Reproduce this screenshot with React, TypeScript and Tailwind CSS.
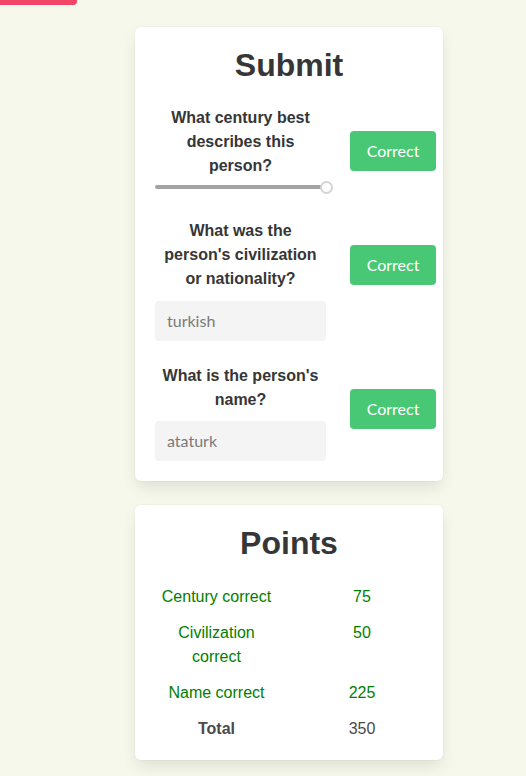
import React from "react";

const sans = { fontFamily: '"Liberation Sans", Arial, sans-serif' };

function Btn() {
  return (
    <button
      className="w-[86px] h-10 shrink-0 rounded-[4px] bg-[#48c774] text-white text-[16px] leading-6"
      style={{ fontFamily: 'Lato, "Open Sans", sans-serif' }}
    >
      Correct
    </button>
  );
}

function Field({ value }: { value: string }) {
  return (
    <div
      className="h-10 w-[171px] rounded-[4px] bg-[#f4f4f4] px-3 flex items-center text-[16px] text-[#7a7a7a]"
      style={{ fontFamily: 'Lato, "Open Sans", sans-serif' }}
    >
      {value}
    </div>
  );
}

export default function App() {
  return (
    <div className="min-h-[776px] bg-[#f5f8ea]" style={sans}>
      <div className="h-[5px] w-[77px] rounded-br-[4px] bg-[#f14668]" />
      <div className="ml-[135px] w-[308px] pt-[22px] pb-4 flex flex-col gap-6">
        {/* Submit card */}
        <div className="rounded-md bg-white pt-[18px] pb-5 pl-5 shadow-[0_8px_16px_-2px_rgba(10,10,10,0.1),0_0_0_1px_rgba(10,10,10,0.02)]">
          <h1 className="-ml-5 text-center text-[32px] leading-10 font-bold text-[#363636]">Submit</h1>
          <div className="mt-[21px] flex flex-col">
            <div className="flex items-start gap-6">
              <div className="w-[171px] flex flex-col">
                <p className="text-center text-[16px] leading-6 font-bold text-[#363636]">
                  What century best describes this person?
                </p>
                <div className="relative h-5 flex items-center -mt-px">
                  <div className="h-[4px] w-[168px] rounded-full bg-[#a3a3a3]" />
                  <div className="absolute left-[165px] top-[3.5px] h-[13px] w-[13px] rounded-full border-2 border-[#d4d4d4] bg-white" />
                </div>
              </div>
              <div className="mt-[25px]">
                <Btn />
              </div>
            </div>

            <div className="mt-[22px] flex items-start gap-6">
              <div className="w-[171px] flex flex-col">
                <p className="text-center text-[16px] leading-6 font-bold text-[#363636]">
                  What was the person's civilization or nationality?
                </p>
                <div className="mt-2.5">
                  <Field value="turkish" />
                </div>
              </div>
              <div className="mt-[26px]">
                <Btn />
              </div>
            </div>

            <div className="mt-[23px] flex items-start gap-6">
              <div className="w-[171px] flex flex-col">
                <p className="text-center text-[16px] leading-6 font-bold text-[#363636]">
                  What is the person's name?
                </p>
                <div className="mt-[9px]">
                  <Field value="ataturk" />
                </div>
              </div>
              <div className="mt-[25px]">
                <Btn />
              </div>
            </div>
          </div>
        </div>

        {/* Points card */}
        <div className="rounded-md bg-white pt-[18px] pb-[13px] px-5 shadow-[0_8px_16px_-2px_rgba(10,10,10,0.1),0_0_0_1px_rgba(10,10,10,0.02)]">
          <h1 className="text-center text-[32px] leading-10 font-bold text-[#363636]">Points</h1>
          <div className="mt-[16px] grid grid-cols-[123px_124px] gap-x-[22px] text-[16px] leading-6 text-center">
            <div className="py-1.5 text-[#008000]">Century correct</div>
            <div className="py-1.5 text-[#008000]">75</div>
            <div className="py-1.5 text-[#008000]">Civilization correct</div>
            <div className="py-1.5 text-[#008000]">50</div>
            <div className="py-1.5 text-[#008000]">Name correct</div>
            <div className="py-1.5 text-[#008000]">225</div>
            <div className="py-1.5 font-bold text-[#4a4a4a]">Total</div>
            <div className="py-1.5 text-[#4a4a4a]">350</div>
          </div>
        </div>
      </div>
    </div>
  );
}
